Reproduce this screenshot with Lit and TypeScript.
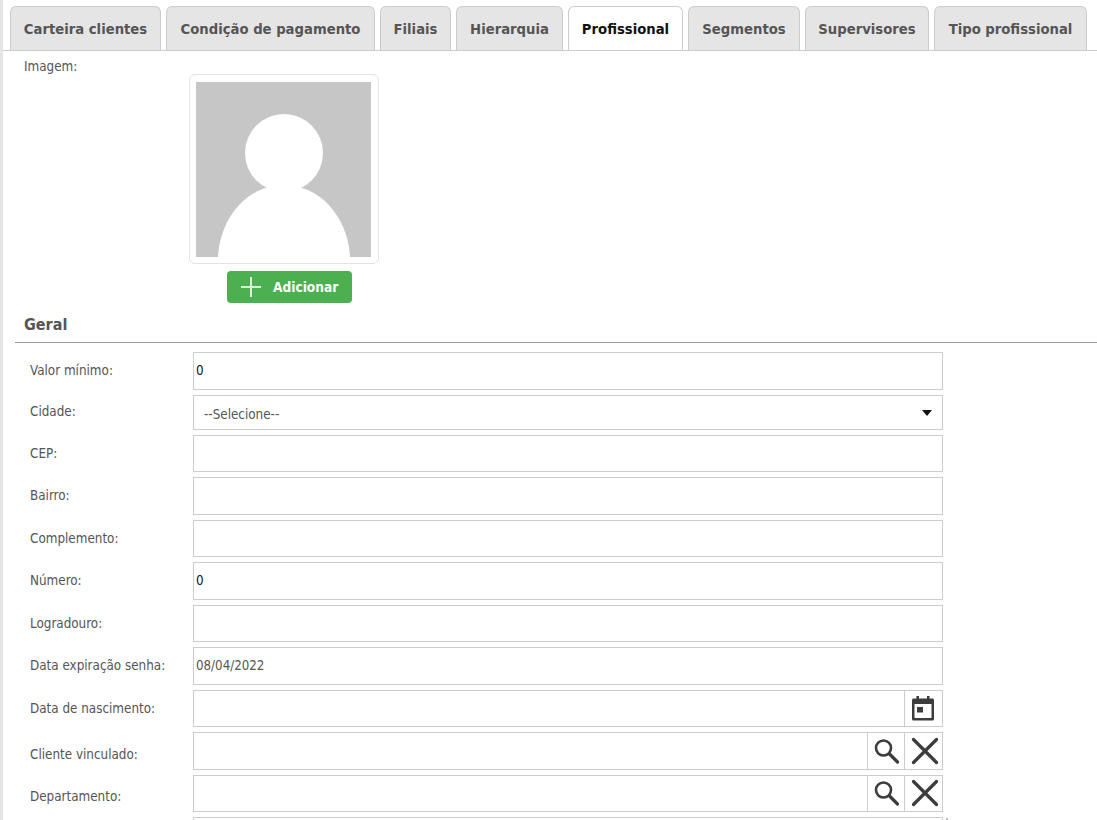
import { LitElement, css, html } from 'lit'
import { customElement } from 'lit/decorators.js'

const TABS: [string, number][] = [
  ['Carteira clientes', 151],
  ['Condição de pagamento', 209],
  ['Filiais', 71],
  ['Hierarquia', 107],
  ['Profissional', 115],
  ['Segmentos', 112],
  ['Supervisores', 124],
  ['Tipo profissional', 153],
]

const searchIcon = html`<svg width="28" height="28" viewBox="0 0 28 28"><circle cx="11.500" cy="11" r="7.500" fill="none" stroke="#3c3c3c" stroke-width="2.600"/><path d="M17.500 17l8 8" stroke="#3c3c3c" stroke-width="3.200" stroke-linecap="round"/></svg>`
const closeIcon = html`<svg class="close" width="28" height="28" viewBox="0 0 28 28"><path d="M2.500 2.500l23 23M25.500 2.500l-23 23" stroke="#3c3c3c" stroke-width="3.200" stroke-linecap="round"/></svg>`
const calendarIcon = html`<svg width="24" height="26" viewBox="0 0 24 26"><path d="M2.500 3.500h19A1.500 1.500 0 0 1 23 5v19a1.500 1.500 0 0 1-1.500 1.500h-19A1.500 1.500 0 0 1 1 24V5a1.500 1.500 0 0 1 1.500-1.500z" fill="#3c3c3c"/><rect x="3.500" y="9" width="17" height="14" fill="#fff"/><rect x="5.500" y="1" width="2.500" height="4" fill="#3c3c3c"/><rect x="16" y="1" width="2.500" height="4" fill="#3c3c3c"/><rect x="6" y="12" width="6" height="5.500" fill="#3c3c3c"/></svg>`

@customElement('app-root')
export class AppRoot extends LitElement {

  static styles = css`
    :host {
      display: block;
      height: 820px;
      overflow: hidden;
      background: #fff;
      font-family: "DejaVu Sans", sans-serif;
      font-stretch: condensed;
      color: #555;
    }

    .page {
      border-left: 3px solid #e5e5e5;
      height: 820px;
      box-sizing: border-box;
    }

    .tabs {
      display: flex;
      gap: 5px;
      height: 51px;
      padding: 6px 0 0 7px;
      box-sizing: border-box;
      border-bottom: 1px solid #ccc;
    }

    .tab {
      height: 44px;
      box-sizing: border-box;
      display: flex;
      align-items: center;
      justify-content: center;
      background: #e5e5e5;
      border: 1px solid #ccc;
      border-bottom: none;
      border-radius: 6px 6px 0 0;
      font-size: 14.7px;
      font-weight: 700;
      color: #555;
    }

    .tab.active {
      background: #fff;
      color: #111;
    }

    .image-row {
      display: flex;
      height: 254px;
    }

    .image-label {
      width: 165px;
      margin-left: 21px;
      padding-top: 8px;
      font-size: 13.33px;
    }

    .image-col {
      width: 190px;
      padding-top: 23px;
      display: flex;
      flex-direction: column;
    }

    .frame {
      width: 190px;
      height: 190px;
      box-sizing: border-box;
      border: 1px solid #e3e3e3;
      border-radius: 6px;
      padding-left: 6px;
      display: flex;
      align-items: center;
    }

    .add {
      margin: 7px 0 0 38px;
      width: 125px;
      height: 32px;
      background: #4caf50;
      border-radius: 4px;
      color: #fff;
      font-size: 13.6px;
      font-weight: 700;
      display: flex;
      align-items: center;
      gap: 12px;
      padding-left: 14px;
      box-sizing: border-box;
    }

    .section {
      margin-left: 12px;
      height: 38px;
      box-sizing: border-box;
      border-bottom: 1px solid #999;
      padding: 10px 0 0 9px;
      font-size: 16px;
      font-weight: 700;
      color: #555;
    }

    .form {
      padding: 9px 0 0 27px;
      display: flex;
      flex-direction: column;
      gap: 5px;
    }

    .row {
      display: flex;
      height: 37.5px;
      align-items: center;
      font-size: 13.33px;
    }

    .row.select-row {
      height: 35px;
    }

    .row.select-row label {
      padding-bottom: 2px;
    }

    .row.lookup label {
      padding-top: 7px;
    }

    .row label {
      width: 163px;
      flex: none;
    }

    .control {
      width: 750px;
      height: 100%;
      box-sizing: border-box;
      border: 1px solid #ccc;
      display: flex;
      align-items: center;
      padding-left: 2px;
      color: #111;
    }

    .control.muted {
      color: #555;
      font-size: 13.2px;
    }

    .control.select {
      padding: 5px 10px 0;
      justify-content: space-between;
      color: #555;
    }

    .control.addons {
      padding-left: 0;
    }

    .arrow {
      width: 0;
      height: 0;
      margin-top: -3px;
      border-left: 5px solid transparent;
      border-right: 5px solid transparent;
      border-top: 6px solid #111;
    }

    .value {
      flex: 1;
    }

    .btn {
      width: 37px;
      height: 100%;
      flex: none;
      box-sizing: border-box;
      border-left: 1px solid #ccc;
      display: flex;
      align-items: center;
      justify-content: center;
    }

    .btn.last {
      width: 38px;
      padding-right: 2px;
    }

    .btn .close {
      margin-left: 4px;
    }

    .req {
      width: 2px;
      height: 2px;
      margin: 1px 0 0 3px;
      align-self: flex-start;
      background: #bbb;
    }
  `;

  private _row(label: string, value = '', muted = false) {
    return html`<div class="row"><label>${label}</label><div class="control ${muted ? 'muted' : ''}">${value}</div></div>`
  }

  private _lookup(label: string) {
    return html`<div class="row lookup"><label>${label}</label><div class="control addons"><span class="value"></span><span class="btn">${searchIcon}</span><span class="btn last">${closeIcon}</span></div></div>`
  }

  render() {
    return html`
      <div class="page">
        <div class="tabs">
          ${TABS.map(([t, w]) => html`<div class="tab ${t === 'Profissional' ? 'active' : ''}" style="width:${w}px">${t}</div>`)}
        </div>
        <div class="image-row">
          <div class="image-label">Imagem:</div>
          <div class="image-col">
            <div class="frame">
              <svg width="175" height="175" viewBox="0 0 175 175">
                <rect width="175" height="175" fill="#c6c6c6"/>
                <circle cx="88" cy="71" r="39" fill="#fff"/>
                <path d="M22 175C24 135 52 103 88 103S152 135 154 175z" fill="#fff"/>
              </svg>
            </div>
            <div class="add">
              <svg width="20" height="20" viewBox="0 0 20 20"><path d="M10 0v20M0 10h20" stroke="#dcefdc" stroke-width="2"/></svg>
              <span>Adicionar</span>
            </div>
          </div>
        </div>
        <div class="section">Geral</div>
        <div class="form">
          ${this._row('Valor mínimo:', '0')}
          <div class="row select-row"><label>Cidade:</label><div class="control select"><span>--Selecione--</span><span class="arrow"></span></div></div>
          ${this._row('CEP:')}
          ${this._row('Bairro:')}
          ${this._row('Complemento:')}
          ${this._row('Número:', '0')}
          ${this._row('Logradouro:')}
          ${this._row('Data expiração senha:', '08/04/2022', true)}
          <div class="row"><label>Data de nascimento:</label><div class="control addons"><span class="value"></span><span class="btn last">${calendarIcon}</span></div></div>
          ${this._lookup('Cliente vinculado:')}
          ${this._lookup('Departamento:')}
          <div class="row"><label></label><div class="control"></div><span class="req"></span></div>
        </div>
      </div>
    `;
  }
}

declare global {
  interface HTMLElementTagNameMap {
    'app-root': AppRoot
  }
}
